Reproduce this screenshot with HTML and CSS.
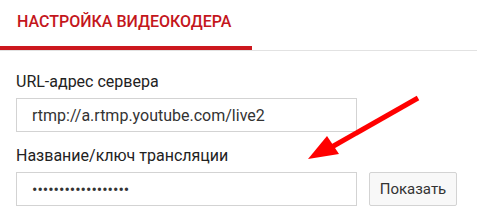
FILE: index.html
```html
<!DOCTYPE html>
<html>
  <head>
    <meta charset="utf-8" />
    <title>Настройка видеокодера</title>
    <link rel="stylesheet" href="styles.css">
  </head>
  <body>
    <div class="tabs">
      <div class="tab active">НАСТРОЙКА ВИДЕОКОДЕРА</div>
    </div>

    <div class="form">
      <label class="field-label" for="serverUrl">URL-адрес сервера</label>
      <div class="field-row">
        <input id="serverUrl" class="text-input" type="text" value="rtmp://a.rtmp.youtube.com/live2" readonly />
      </div>

      <label class="field-label second" for="streamKey">Название/ключ трансляции</label>
      <div class="field-row">
        <input id="streamKey" class="text-input" type="password" value="xxxxxxxxxxxxxxxxxx" readonly />
        <button class="button">Показать</button>
      </div>
    </div>

    <svg class="arrow" width="477" height="219" viewBox="0 0 477 219">
      <line x1="418" y1="98" x2="330" y2="148" stroke="#ff0000" stroke-width="5" />
      <polygon points="308,159 327,136 339,154" fill="#ff0000" />
    </svg>
  </body>
</html>
```

FILE: styles.css
```css
body {
  margin: 0;
  background-color: #fff;
  color: #333;
  font-family: Roboto, 'Liberation Sans', sans-serif;
  position: relative;
  width: 477px;
  height: 219px;
  overflow: hidden;
}

.tabs {
  border-bottom: 1px solid #e2e2e2;
}

.tab {
  width: 235px;
  padding: 11px 0 13px 17px;
  font-size: 16px;
  font-weight: 500;
  line-height: 22px;
  white-space: nowrap;
  color: #c4161c;
}

.tab.active {
  border-bottom: 4px solid #cc181e;
}

.form {
  padding-left: 16px;
}

.field-label {
  display: block;
  margin-top: 21px;
  margin-bottom: 6px;
  font-size: 16px;
  line-height: 20px;
  color: #222;
}

.field-label.second {
  margin-top: 14px;
}

.field-row {
  display: flex;
  gap: 12px;
}

.text-input {
  box-sizing: border-box;
  width: 341px;
  height: 34px;
  padding: 0 15px;
  border: 1px solid #d3d3d3;
  border-radius: 0;
  font-family: Roboto, 'Liberation Sans', sans-serif;
  font-size: 16px;
  color: #333;
  outline: none;
}

.button {
  box-sizing: border-box;
  width: 88px;
  height: 34px;
  background-color: #f8f8f8;
  border: 1px solid #d3d3d3;
  border-radius: 2px;
  font-family: Roboto, 'Liberation Sans', sans-serif;
  font-size: 15px;
  color: #333;
  cursor: pointer;
}

.arrow {
  position: absolute;
  left: 0;
  top: 0;
  pointer-events: none;
}
```
